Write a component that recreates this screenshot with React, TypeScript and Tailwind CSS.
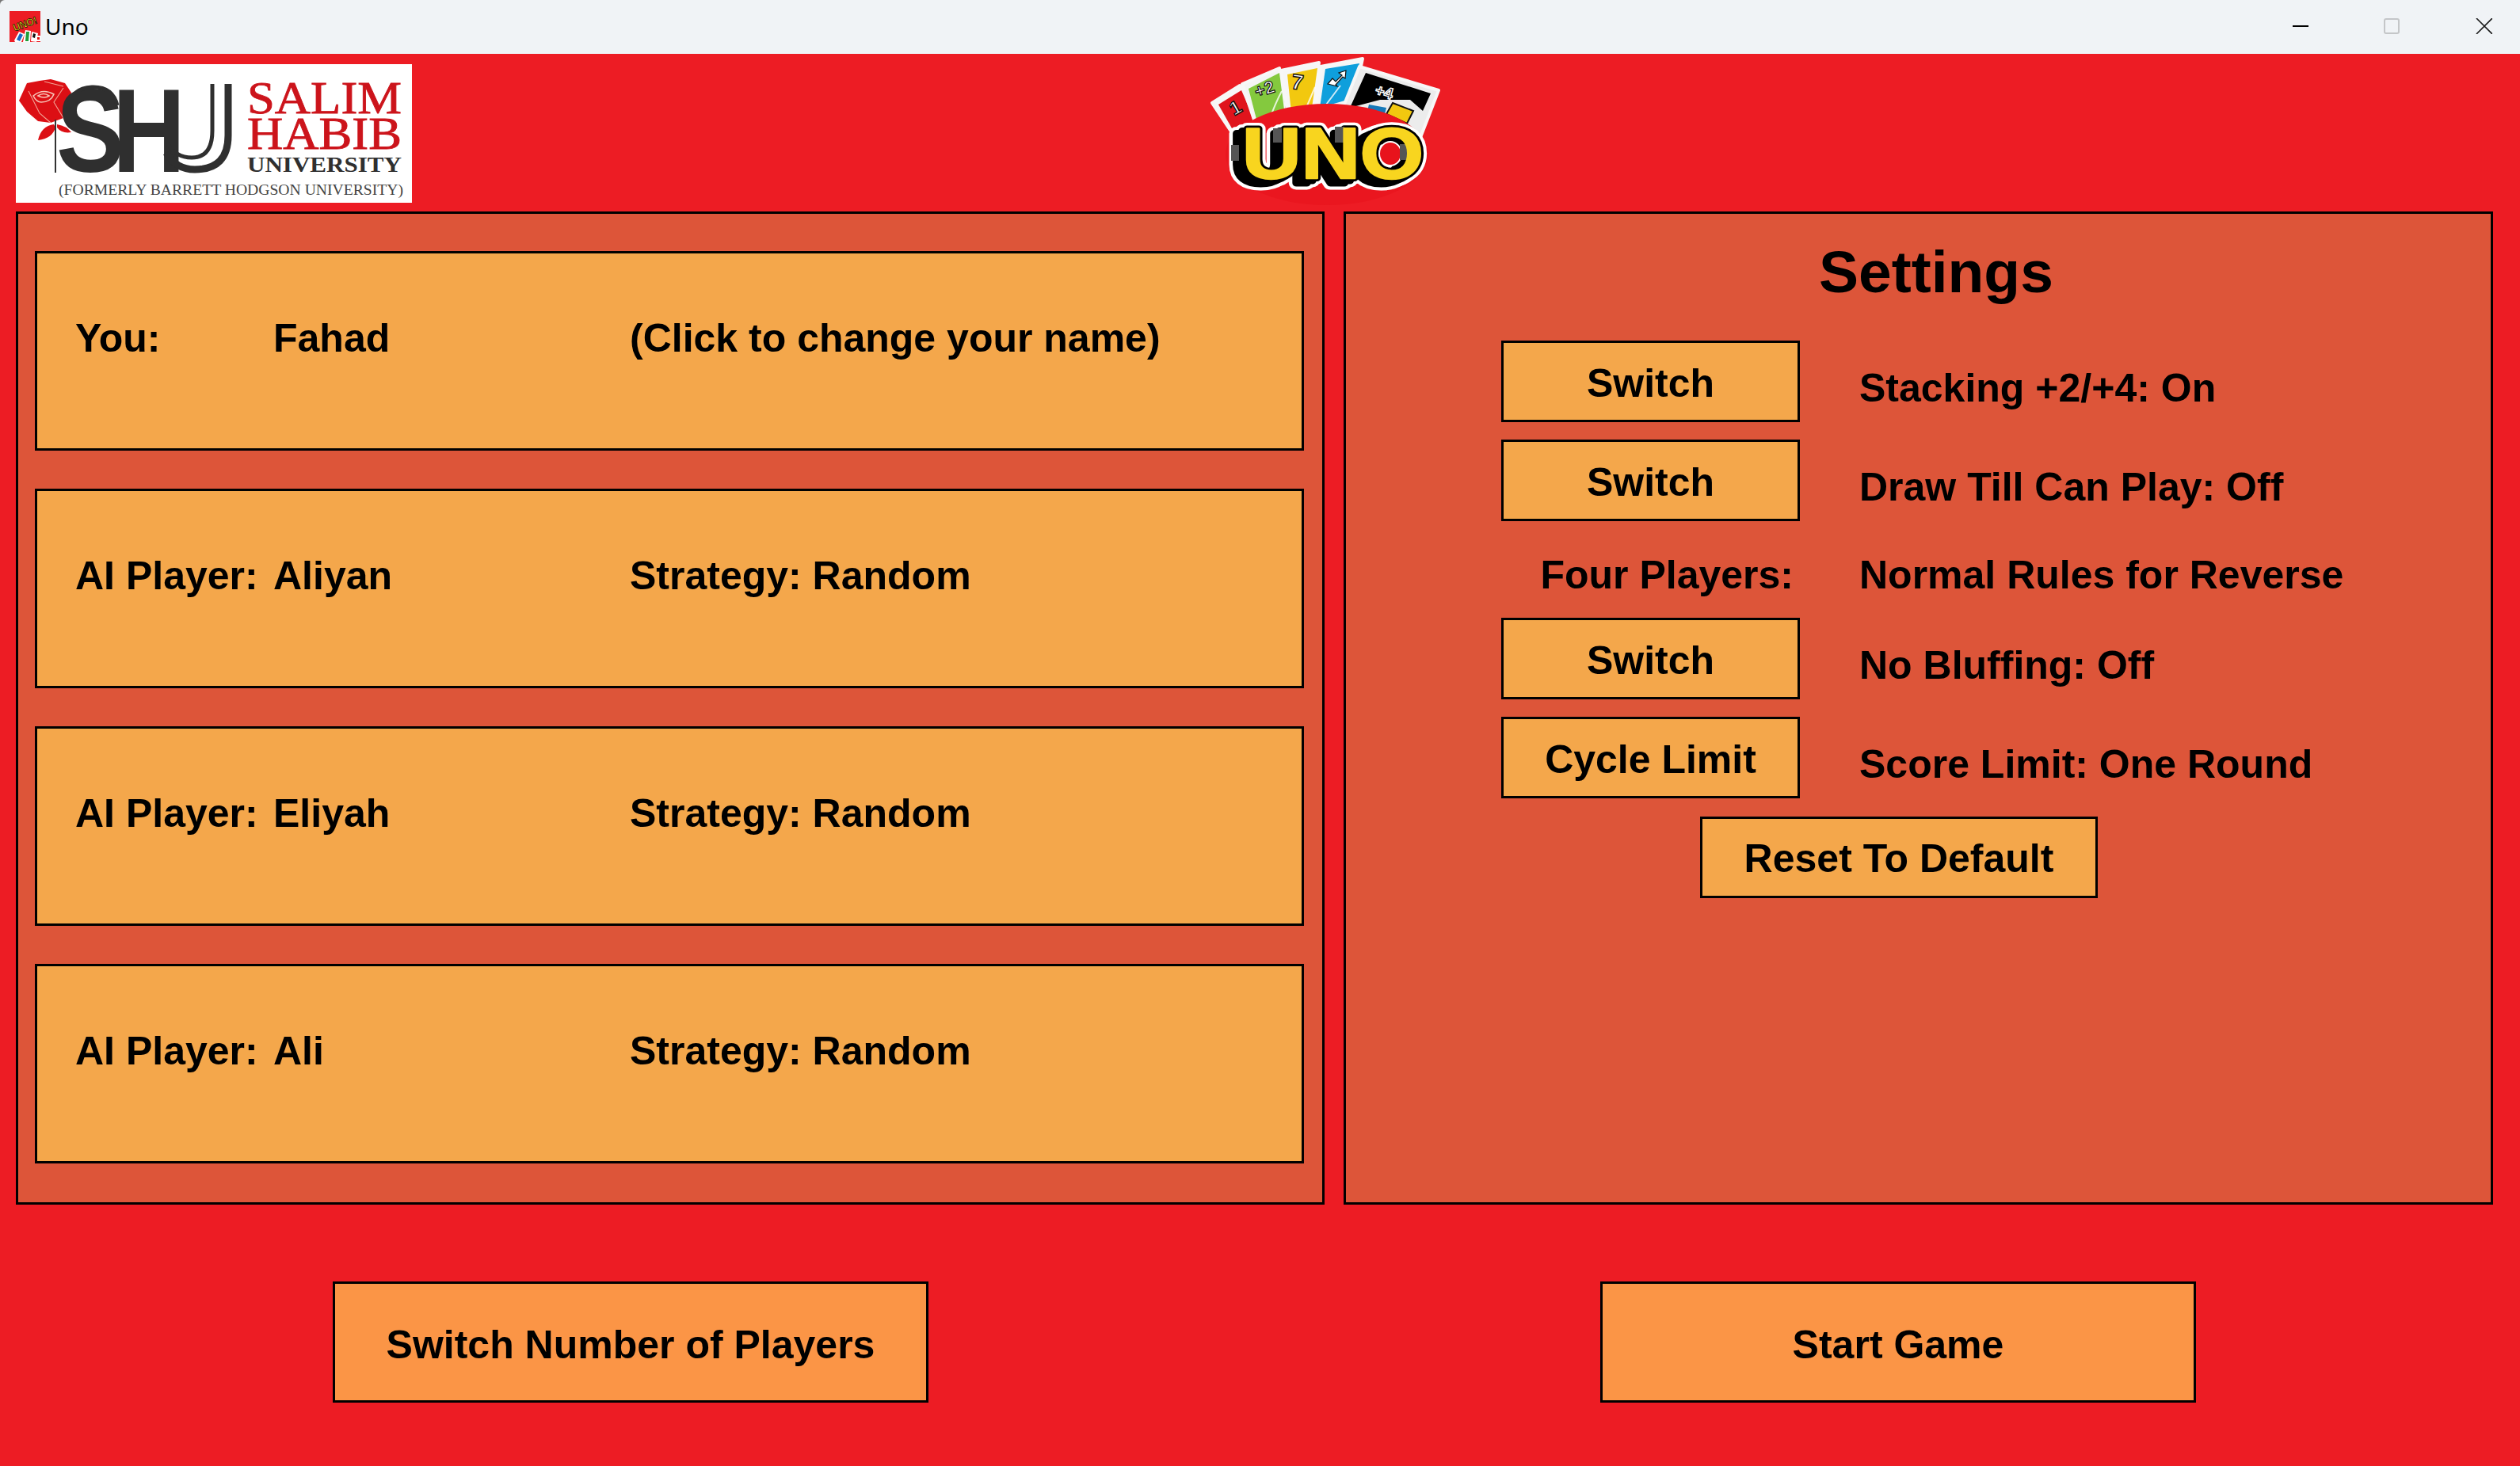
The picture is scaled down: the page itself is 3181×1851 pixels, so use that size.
const panelText = "text-[50px] font-bold text-black leading-none [font-family:'Liberation_Sans',Arial,sans-serif]";

function AppIcon() {
  return (
    <svg width="39" height="39" viewBox="0 0 39 39" className="shrink-0">
      <rect width="39" height="39" fill="#ed1c24" />
      <text x="4" y="21" fontSize="13" fontWeight="700" fontFamily="'Liberation Sans',sans-serif" fill="#f8e71c" stroke="#000" strokeWidth="0.7" transform="rotate(-20 19 16)" textLength="31" lengthAdjust="spacingAndGlyphs">UNO!</text>
      <polygon points="6,37 12,26 19,29 15,39 7,39" fill="#fff" />
      <polygon points="9,36 13,28 17,30 13,38" fill="#1769c4" />
      <polygon points="17,39 20,24 27,25 26,39" fill="#fff" />
      <polygon points="20,38 21,26 25,26 24,38" fill="#1f9d3a" />
      <polygon points="27,38 28,26 36,28 34,39" fill="#fff" />
      <polygon points="29,33 30,28 33,29 32,34" fill="#111" />
      <rect x="34" y="31" width="5" height="7" fill="#fff" />
      <rect x="35" y="33" width="3" height="3" fill="#d11" />
    </svg>
  );
}

function WindowControls() {
  return (
    <svg width="252" height="20" viewBox="0 0 252 20" className="mr-[35px]">
      <rect x="0" y="9" width="20" height="2" fill="#000" />
      <rect x="116" y="1" width="18" height="18" rx="2" fill="none" stroke="#c4c6c8" strokeWidth="2" />
      <path d="M232 0 L252 20 M252 0 L232 20" stroke="#1a1a1a" strokeWidth="1.6" fill="none" />
    </svg>
  );
}

function ShuLogo() {
  return (
    <svg width="500" height="175" viewBox="0 0 500 175" className="bg-white shrink-0">
      {/* rose */}
      <path d="M4 46 L14 24 L30 21 L44 19 L62 24 L70 36 L66 54 L60 68 L44 74 L28 72 L14 60 Z" fill="#dc0f14" />
      <path d="M22 40 Q34 30 48 38 Q44 48 32 48 Q26 48 22 40 Z M28 40 Q35 35 42 40 Q36 44 28 40 Z" fill="none" stroke="#f7c3b6" strokeWidth="1.6" />
      <path d="M16 34 L30 62 L44 74 M60 30 L48 48 L60 68 M36 22 L60 28" fill="none" stroke="#f2a394" strokeWidth="1.1" />
      <path d="M48 76 Q32 78 28 96 Q46 94 50 80 Z" fill="#dc0f14" />
      <path d="M52 76 Q64 78 70 86 Q58 88 52 80 Z" fill="#dc0f14" />
      <rect x="49" y="70" width="2" height="67" fill="#333" />
      {/* SHU */}
      <text x="51" y="136" fontSize="150" fontWeight="700" fontFamily="'Liberation Sans',sans-serif" fill="#2f2f2f" textLength="86" lengthAdjust="spacingAndGlyphs">S</text>
      <path d="M66 56 Q70 30 96 29 Q122 28 128 52" fill="none" stroke="#2f2f2f" strokeWidth="5" />
      <text x="122" y="136" fontSize="151" fontWeight="700" fontFamily="'Liberation Sans',sans-serif" fill="#2f2f2f" textLength="92" lengthAdjust="spacingAndGlyphs">H</text>
      <path d="M248 25 V84 Q248 118 222 118 Q202 118 191 100" fill="none" stroke="#2f2f2f" strokeWidth="5" />
      <path d="M268 25 V90 Q268 133 226 133 Q202 133 190 112" fill="none" stroke="#2f2f2f" strokeWidth="9" />
      {/* wordmark */}
      <g fontFamily="'Liberation Serif',serif">
        <text x="292" y="62" fontSize="56" fill="#cc141b" stroke="#cc141b" strokeWidth="0.8" textLength="195" lengthAdjust="spacingAndGlyphs">SALIM</text>
        <text x="292" y="107" fontSize="56" fill="#cc141b" stroke="#cc141b" strokeWidth="0.8" textLength="195" lengthAdjust="spacingAndGlyphs">HABIB</text>
        <text x="292" y="136" fontSize="27" fontWeight="700" fill="#2f2f2f" textLength="195" lengthAdjust="spacingAndGlyphs">UNIVERSITY</text>
        <text x="54" y="165" fontSize="18" fill="#444" textLength="435" lengthAdjust="spacingAndGlyphs">(FORMERLY BARRETT HODGSON UNIVERSITY)</text>
      </g>
    </svg>
  );
}

function UnoLogo() {
  const font = "'Liberation Sans',sans-serif";
  const uno = { x: 88, fontSize: 91, fontWeight: 700, fontFamily: font, textLength: 229, lengthAdjust: "spacingAndGlyphs" as const, strokeLinejoin: "round" as const };
  const cardEdge = { stroke: "#f7f7f7", strokeWidth: 4, strokeLinejoin: "round" as const };
  return (
    <svg width="380" height="192" viewBox="0 8 380 192" className="shrink-0 ml-[960px]">
      <polygon points="50,70 85,48 112,100 74,106" fill="#f7f7f7" {...cardEdge} />
      <polygon points="58,72 87,54 107,100 75,102" fill="#e0141c" />
      <polygon points="88,46 135,26 142,88 106,100" fill="#f4f4f4" {...cardEdge} />
      <polygon points="96,52 135,32 142,86 108,98" fill="#84c93e" />
      <polygon points="137,29 185,19 178,78 146,86" fill="#f6f6f6" {...cardEdge} />
      <polygon points="145,34 183,26 176,76 150,82" fill="#f2c80f" />
      <polygon points="187,24 240,14 228,70 181,80" fill="#f6f6f6" {...cardEdge} />
      <polygon points="193,27 236,20 221,66 186,76" fill="#0f9fdc" />
      <path d="M168 78 L180 50 M194 72 L212 48" stroke="#fff" strokeWidth="2" opacity="0.8" />
      <path d="M122 92 Q130 70 138 55" stroke="#fff" strokeWidth="2" fill="none" opacity="0.8" />
      <polygon points="236,24 336,54 312,116 212,84" fill="#ececec" {...cardEdge} />
      <polygon points="244,32 326,58 316,80 300,66 262,66 224,76" fill="#000" />
      <polygon points="248,72 270,76 268,84 246,80" fill="#1578b8" />
      <polygon points="278,70 304,80 296,96 270,84" fill="#f2c80f" stroke="#111" strokeWidth="2" />
      <g fontFamily={font} fontWeight="700">
        <text x="80" y="84" fontSize="24" fill="#fff" stroke="#111" strokeWidth="1.4" transform="rotate(-30 80 77)" textAnchor="middle">1</text>
        <text x="116" y="60" fontSize="22" fill="#fff" stroke="#111" strokeWidth="1.2" transform="rotate(-18 116 52)" textAnchor="middle">+2</text>
        <text x="158" y="53" fontSize="27" fill="#fff" stroke="#111" strokeWidth="1.4" transform="rotate(8 158 42)" textAnchor="middle">7</text>
        <text x="268" y="63" fontSize="20" fill="#000" stroke="#fff" strokeWidth="1.4" transform="rotate(16 268 54)" textAnchor="middle">+4</text>
      </g>
      <path d="M196 46 L202 39 L206 43 L214 35 L210 32 L219 29 L218 39 L215 37 L206 47 L208 49 Z" fill="#fff" stroke="#111" strokeWidth="1.2" />
      <ellipse cx="195" cy="135" rx="128" ry="64" fill="#ea161f" />
      <text {...uno} x={75} y="171" fill="#fff" stroke="#fff" strokeWidth="17">UNO</text>
      <text {...uno} x={82} y="168" fill="#fff" stroke="#fff" strokeWidth="17">UNO</text>
      <text {...uno} y="165" fill="#fff" stroke="#fff" strokeWidth="15">UNO</text>
      <text {...uno} x={75} y="171" fill="#000" stroke="#000" strokeWidth="9">UNO</text>
      <text {...uno} x={82} y="168" fill="#000" stroke="#000" strokeWidth="9">UNO</text>
      <text {...uno} y="165" fill="#000" stroke="#000" strokeWidth="8">UNO</text>
      <ellipse cx="275" cy="134" rx="14" ry="15" fill="#e8131c" stroke="#fff" strokeWidth="2" />
      <rect x="74" y="123" width="10" height="20" fill="#555" />
      <rect x="127" y="102" width="11" height="18" fill="#555" />
      <rect x="205" y="100" width="12" height="20" fill="#555" />
      <rect x="287" y="122" width="11" height="20" fill="#555" />
      <text {...uno} y="165" fill="#f8d51f" stroke="#f8d51f" strokeWidth="2.5">UNO</text>
    </svg>
  );
}

function PlayerRow({ label, name, info }: { label: string; name: string; info: string }) {
  return (
    <div className={`flex h-[252px] border-[3px] border-black bg-[#f4a74b] pl-[48px] pt-[82px] ${panelText}`}>
      <div className="w-[250px] shrink-0">{label}</div>
      <div className="w-[450px] shrink-0">{name}</div>
      <div>{info}</div>
    </div>
  );
}

function SmallButton({ children }: { children: string }) {
  return (
    <div className={`flex h-[103px] w-[377px] shrink-0 items-center justify-center border-[3px] border-black bg-[#f4a74b] pt-[5px] ${panelText}`}>
      {children}
    </div>
  );
}

function SettingRow({ button, text }: { button: string; text: string }) {
  return (
    <div className="flex items-center">
      <SmallButton>{button}</SmallButton>
      <div className={`ml-[75px] pt-[16px] ${panelText}`}>{text}</div>
    </div>
  );
}

function BigButton({ children, className }: { children: string; className: string }) {
  return (
    <div className={`flex h-[153px] w-[752px] items-center justify-center border-[3px] border-black bg-[#fb9546] pt-[6px] ${panelText} ${className}`}>
      {children}
    </div>
  );
}

export default function App() {
  return (
    <div className="flex h-[1851px] w-[3181px] flex-col overflow-hidden bg-[#ed1c24]">
      <div className="shrink-0 bg-[#777]">
        <div className="flex h-[68px] items-center justify-between rounded-tl-[6px] bg-[#f0f3f6] pl-[12px] pb-[2px]">
          <div className="flex items-center gap-[6px] text-[28px] text-black [font-family:'Noto_Sans',sans-serif]">
            <AppIcon />
            <span>Uno</span>
          </div>
          <WindowControls />
        </div>
      </div>
      <div className="flex h-[199px] shrink-0 items-start pl-[20px] pt-[13px]">
        <ShuLogo />
        <div className="-mt-[13px]">
          <UnoLogo />
        </div>
      </div>
      <div className="flex h-[1254px] shrink-0 gap-[24px] pl-[20px]">
        <div className="flex w-[1652px] flex-col gap-[48px] border-[3px] border-black bg-[#dd5539] pl-[21px] pr-[23px] pt-[47px]">
          <PlayerRow label="You:" name="Fahad" info="(Click to change your name)" />
          <PlayerRow label="AI Player:" name="Aliyan" info="Strategy: Random" />
          <PlayerRow label="AI Player:" name="Eliyah" info="Strategy: Random" />
          <PlayerRow label="AI Player:" name="Ali" info="Strategy: Random" />
        </div>
        <div className="flex w-[1451px] flex-col border-[3px] border-black bg-[#dd5539] pl-[196px]">
          <div className={`ml-[401px] flex h-[160px] items-center pb-[14px] !text-[75px] ${panelText}`}>Settings</div>
          <div className="flex flex-col gap-[22px]">
            <SettingRow button="Switch" text="Stacking +2/+4: On" />
            <SettingRow button="Switch" text="Draw Till Can Play: Off" />
          </div>
          <div className={`flex h-[122px] items-center pt-[14px] ${panelText}`}>
            <div className="w-[369px] text-right">Four Players:</div>
            <div className="ml-[83px]">Normal Rules for Reverse</div>
          </div>
          <div className="flex flex-col gap-[22px]">
            <SettingRow button="Switch" text="No Bluffing: Off" />
            <SettingRow button="Cycle Limit" text="Score Limit: One Round" />
          </div>
          <div className={`ml-[251px] mt-[23px] flex h-[103px] w-[502px] items-center justify-center border-[3px] border-black bg-[#f4a74b] pt-[2px] ${panelText}`}>Reset To Default</div>
        </div>
      </div>
      <div className="mt-[97px] flex pl-[420px]">
        <BigButton className="">Switch Number of Players</BigButton>
        <BigButton className="ml-[848px]">Start Game</BigButton>
      </div>
    </div>
  );
}
